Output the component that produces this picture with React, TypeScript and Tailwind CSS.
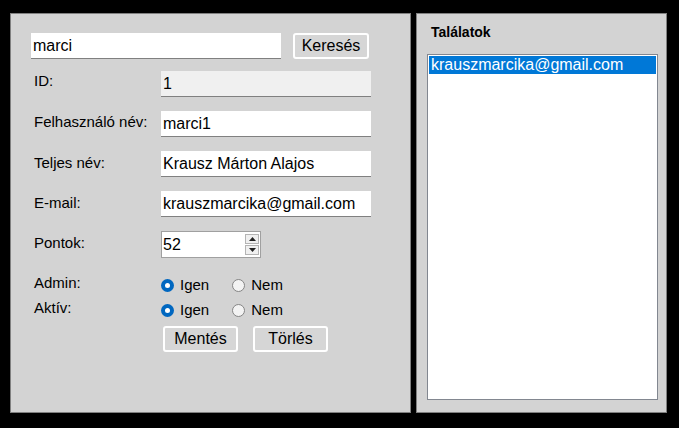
import React from "react";

function Radio({ checked }: { checked?: boolean }) {
  return checked ? (
    <span className="w-[13px] h-[13px] rounded-full bg-[#0067c0] flex items-center justify-center shrink-0">
      <span className="w-[5px] h-[5px] rounded-full bg-white" />
    </span>
  ) : (
    <span className="w-[13px] h-[13px] rounded-full border border-[#858585] bg-[#f3f3f3] shrink-0" />
  );
}

function RadioRow({ label, top }: { label: string; top: string }) {
  return (
    <div className={`flex h-[22px] ${top}`}>
      <div className="w-[130px] pl-[3px] leading-[18px] text-[15px]">{label}</div>
      <div className="flex items-center h-[22px] leading-[22px] text-[15px]">
        <Radio checked />
        <span className="ml-[6px]">Igen</span>
        <div className="ml-[23px] flex">
          <Radio />
        </div>
        <span className="ml-[6px]">Nem</span>
      </div>
    </div>
  );
}

function Field({
  label,
  value,
  labelPad,
  disabled,
}: {
  label: string;
  value: string;
  labelPad: string;
  disabled?: boolean;
}) {
  return (
    <div className="flex h-[26px] mt-[14px]">
      <div className={`w-[130px] pl-[3px] leading-[18px] text-[15px] ${labelPad}`}>{label}</div>
      <input
        readOnly
        defaultValue={value}
        className={`w-[210px] h-[26px] px-[2px] border-b border-[#808080] outline-none text-black ${
          disabled ? "bg-[#f0f0f0]" : "bg-white"
        }`}
      />
    </div>
  );
}

export default function App() {
  return (
    <div className="w-[679px] h-[428px] bg-black flex gap-[5px] pl-[10px] pt-[13px] text-[16px] text-black font-['Liberation_Sans',Arial,sans-serif]">
      <div className="w-[401px] h-[400px] border border-[#808080] bg-[#d3d3d3] pt-[19px] pl-[20px]">
        <div className="flex">
          <input
            readOnly
            defaultValue="marci"
            className="w-[250px] h-[26px] px-[2px] bg-white border-b border-[#808080] outline-none"
          />
          <button className="ml-[12px] w-[76px] h-[26px] bg-[#d6d6d6] border-2 border-white rounded-[3px] leading-[20px]">
            Keresés
          </button>
        </div>
        <div className="mt-[-2px]">
          <Field label="ID:" value="1" labelPad="pt-[1px]" disabled />
          <Field label="Felhasználó név:" value="marci1" labelPad="pt-[2px]" />
          <Field label="Teljes név:" value="Krausz Márton Alajos" labelPad="pt-[3px]" />
          <Field label="E-mail:" value="krauszmarcika@gmail.com" labelPad="pt-[3px]" />
          <div className="flex h-[26px] mt-[14px]">
            <div className="w-[130px] pl-[3px] leading-[18px] text-[15px] pt-[3px]">Pontok:</div>
            <div className="w-[100px] h-[27px] border border-[#a0a0a0] bg-white flex items-center">
              <span className="pl-[1px]">52</span>
              <div className="ml-auto mr-[1px] w-[14px] h-[21px] flex flex-col gap-[1px]">
                <div className="flex-1 bg-[#f0f0f0] border border-[#b4b4b4] flex items-center justify-center">
                  <svg width="7" height="4" viewBox="0 0 7 4">
                    <path d="M0 4 L3.5 0 L7 4 Z" fill="#222" />
                  </svg>
                </div>
                <div className="flex-1 bg-[#f0f0f0] border border-[#b4b4b4] flex items-center justify-center">
                  <svg width="7" height="4" viewBox="0 0 7 4">
                    <path d="M0 0 L7 0 L3.5 4 Z" fill="#222" />
                  </svg>
                </div>
              </div>
            </div>
          </div>
          <RadioRow label="Admin:" top="mt-[17px]" />
          <RadioRow label="Aktív:" top="mt-[3px]" />
          <div className="flex gap-[15px] mt-[5px] ml-[132px]">
            <button className="w-[75px] h-[26px] bg-[#d6d6d6] border-2 border-white rounded-[3px] leading-[20px]">
              Mentés
            </button>
            <button className="w-[75px] h-[26px] bg-[#d6d6d6] border-2 border-white rounded-[3px] leading-[20px]">
              Törlés
            </button>
          </div>
        </div>
      </div>
      <div className="w-[251px] h-[400px] border border-[#808080] bg-[#d3d3d3] px-[10px] pt-[10px]">
        <div className="pl-[4px] text-[14px] font-bold leading-[16px]">Találatok</div>
        <div className="mt-[14px] w-[231px] h-[346px] border border-[#828790] bg-white p-[1px]">
          <div className="h-[18px] leading-[18px] pl-[2px] bg-[#0078d7] text-white">
            krauszmarcika@gmail.com
          </div>
        </div>
      </div>
    </div>
  );
}
